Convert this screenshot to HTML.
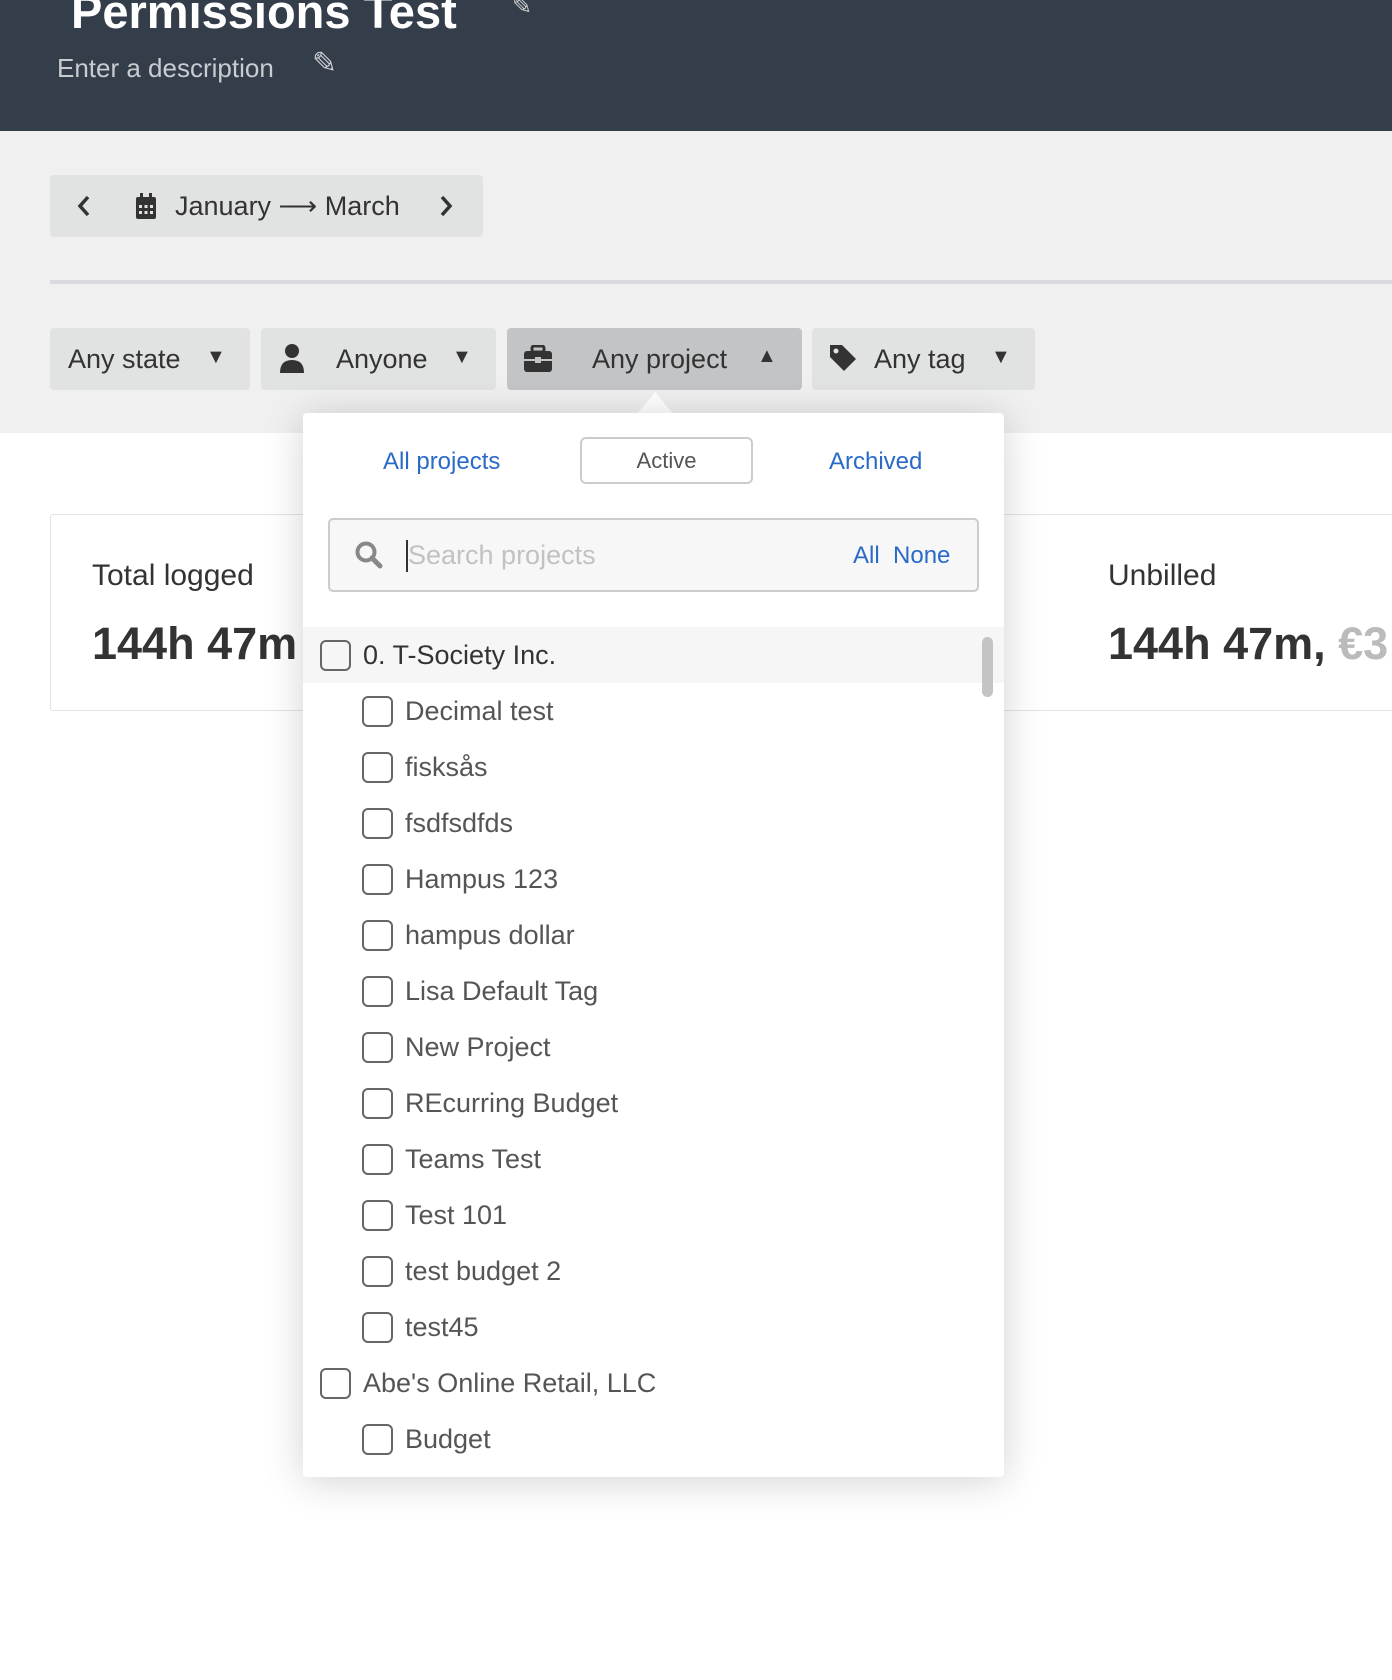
<!DOCTYPE html>
<html><head><meta charset="utf-8"><style>
*{box-sizing:border-box;margin:0;padding:0}
body{width:1392px;height:1680px;overflow:hidden;background:#fff;font-family:"Liberation Sans",sans-serif;position:relative}
.abs{position:absolute}
.hdr{left:0;top:0;width:1392px;height:131px;background:#343d4a}
.gray{left:0;top:131px;width:1392px;height:302px;background:#eff0ef}
.btn{position:absolute;background:#e1e2e2;border-radius:4px;color:#333;font-size:27px;display:flex;align-items:center}
.card{position:absolute;background:#fff;border:1px solid #e3e3e3;border-radius:3px}
.dd{left:303px;top:413px;width:701px;height:1064px;background:#fff;border-radius:4px;box-shadow:0 4px 40px rgba(0,0,0,.18)}
.row{position:absolute;left:0;width:680px;height:56px;display:flex;align-items:center;font-size:27px;color:#555}
.cb{width:31px;height:31px;border:2.5px solid #666;border-radius:6px;margin-right:12px;flex:none}
.blue{color:#2a6ac8}
</style></head><body>
<div class="abs hdr"></div>
<div class="abs" style="left:71px;top:-16px;font-size:47px;font-weight:bold;color:#fff">Permissions Test</div>
<div class="abs" style="left:512px;top:-8px;font-size:24px;color:#ccc">✎</div>
<div class="abs" style="left:57px;top:53px;font-size:26px;color:#c9ccd1">Enter a description</div>
<div class="abs" style="left:312px;top:46px;font-size:30px;color:#c9ccd1">✎</div>
<div class="abs gray"></div>
<div class="btn" style="left:50px;top:175px;width:433px;height:62px">
 <svg class="abs" style="left:26px;top:19px" width="16" height="24" viewBox="0 0 16 24"><path d="M12 3 L4 12 L12 21" fill="none" stroke="#333" stroke-width="3.5"/></svg>
 <svg class="abs" style="left:84px;top:17px" width="24" height="28" viewBox="0 0 24 28"><rect x="2" y="5" width="20" height="22" rx="2" fill="#333"/><rect x="6" y="1" width="3" height="6" fill="#333"/><rect x="15" y="1" width="3" height="6" fill="#333"/><g fill="#e1e2e2"><rect x="5" y="13" width="3" height="3"/><rect x="10.5" y="13" width="3" height="3"/><rect x="16" y="13" width="3" height="3"/><rect x="5" y="19" width="3" height="3"/><rect x="10.5" y="19" width="3" height="3"/><rect x="16" y="19" width="3" height="3"/></g></svg>
 <span class="abs" style="left:125px;top:16px">January ⟶ March</span>
 <svg class="abs" style="left:388px;top:19px" width="16" height="24" viewBox="0 0 16 24"><path d="M4 3 L12 12 L4 21" fill="none" stroke="#333" stroke-width="3.5"/></svg>
</div>
<div class="abs" style="left:50px;top:280px;width:1342px;height:4px;background:#d9dadd"></div>
<div class="btn" style="left:50px;top:328px;width:200px;height:62px"><span class="abs" style="left:18px;top:16px">Any state</span><span class="abs" style="left:156px;top:18px;font-size:20px">▼</span></div>
<div class="btn" style="left:261px;top:328px;width:235px;height:62px">
 <svg class="abs" style="left:18px;top:15px" width="26" height="30" viewBox="0 0 26 30"><circle cx="13" cy="8" r="7" fill="#333"/><path d="M1 30 Q1 17 13 17 Q25 17 25 30Z" fill="#333"/></svg>
 <span class="abs" style="left:75px;top:16px">Anyone</span><span class="abs" style="left:191px;top:18px;font-size:20px">▼</span></div>
<div class="btn" style="left:507px;top:328px;width:295px;height:62px;background:#c3c4c6">
 <svg class="abs" style="left:16px;top:17px" width="30" height="28" viewBox="0 0 30 28"><rect x="9" y="1" width="12" height="6" rx="2" fill="none" stroke="#333" stroke-width="3"/><rect x="1" y="6" width="28" height="21" rx="3" fill="#333"/><rect x="1" y="14" width="28" height="2" fill="#c3c4c6"/><rect x="12" y="12" width="6" height="6" fill="#c3c4c6"/></svg>
 <span class="abs" style="left:85px;top:16px">Any project</span><span class="abs" style="left:250px;top:17px;font-size:20px">▲</span></div>
<div class="btn" style="left:812px;top:328px;width:223px;height:62px">
 <svg class="abs" style="left:16px;top:15px" width="30" height="30" viewBox="0 0 30 30"><path d="M2 2 H14 L28 16 L16 28 L2 14Z" fill="#333"/><circle cx="8" cy="8" r="2.5" fill="#e1e2e2"/></svg>
 <span class="abs" style="left:62px;top:16px">Any tag</span><span class="abs" style="left:179px;top:18px;font-size:20px">▼</span></div>

<div class="card" style="left:50px;top:514px;width:300px;height:197px">
 <div class="abs" style="left:41px;top:44px;font-size:30px;color:#333">Total logged</div>
 <div class="abs" style="left:41px;top:103px;font-size:45px;font-weight:bold;color:#333;white-space:nowrap">144h 47m</div>
</div>
<div class="card" style="left:1000px;top:514px;width:400px;height:197px;overflow:hidden">
 <div class="abs" style="left:107px;top:44px;font-size:30px;color:#333">Unbilled</div>
 <div class="abs" style="left:107px;top:103px;font-size:45px;font-weight:bold;color:#333;white-space:nowrap">144h 47m, <span style="color:#bbb">€3</span></div>
</div>

<div class="abs" style="left:637px;top:392px;width:0;height:0;border-left:18px solid transparent;border-right:18px solid transparent;border-bottom:22px solid #fff"></div>
<div class="abs dd">
 <div class="abs blue" style="left:80px;top:35px;font-size:24px">All projects</div>
 <div class="abs" style="left:277px;top:24px;width:173px;height:47px;border:2px solid #ccc;border-radius:6px;font-size:22px;color:#555;text-align:center;line-height:43px">Active</div>
 <div class="abs blue" style="left:526px;top:35px;font-size:24px">Archived</div>
 <div class="abs" style="left:25px;top:105px;width:651px;height:74px;background:#f7f7f7;border:2px solid #ccc;border-radius:5px">
  <svg class="abs" style="left:24px;top:20px" width="30" height="30" viewBox="0 0 30 30"><circle cx="12" cy="12" r="8.5" fill="none" stroke="#888" stroke-width="4"/><path d="M18 18 L26 26" stroke="#888" stroke-width="5" stroke-linecap="round"/></svg>
  <div class="abs" style="left:76px;top:20px;width:2px;height:32px;background:#333"></div>
  <div class="abs" style="left:78px;top:20px;font-size:27px;color:#c2c2c2">Search projects</div>
  <div class="abs blue" style="left:523px;top:22px;font-size:24px">All&nbsp; None</div>
 </div>
 <div class="row" style="top:214px;background:#f6f6f6;width:701px;padding-left:17px;color:#333"><div class="cb"></div>0. T-Society Inc.</div>
 <div class="abs" style="left:679px;top:224px;width:11px;height:60px;border-radius:6px;background:#c4c4c4"></div>
 <div class="row" style="top:270px;padding-left:59px"><div class="cb"></div>Decimal test</div>
 <div class="row" style="top:326px;padding-left:59px"><div class="cb"></div>fisksås</div>
 <div class="row" style="top:382px;padding-left:59px"><div class="cb"></div>fsdfsdfds</div>
 <div class="row" style="top:438px;padding-left:59px"><div class="cb"></div>Hampus 123</div>
 <div class="row" style="top:494px;padding-left:59px"><div class="cb"></div>hampus dollar</div>
 <div class="row" style="top:550px;padding-left:59px"><div class="cb"></div>Lisa Default Tag</div>
 <div class="row" style="top:606px;padding-left:59px"><div class="cb"></div>New Project</div>
 <div class="row" style="top:662px;padding-left:59px"><div class="cb"></div>REcurring Budget</div>
 <div class="row" style="top:718px;padding-left:59px"><div class="cb"></div>Teams Test</div>
 <div class="row" style="top:774px;padding-left:59px"><div class="cb"></div>Test 101</div>
 <div class="row" style="top:830px;padding-left:59px"><div class="cb"></div>test budget 2</div>
 <div class="row" style="top:886px;padding-left:59px"><div class="cb"></div>test45</div>
 <div class="row" style="top:942px;padding-left:17px"><div class="cb"></div>Abe's Online Retail, LLC</div>
 <div class="row" style="top:998px;padding-left:59px"><div class="cb"></div>Budget</div>
</div>
</body></html>
